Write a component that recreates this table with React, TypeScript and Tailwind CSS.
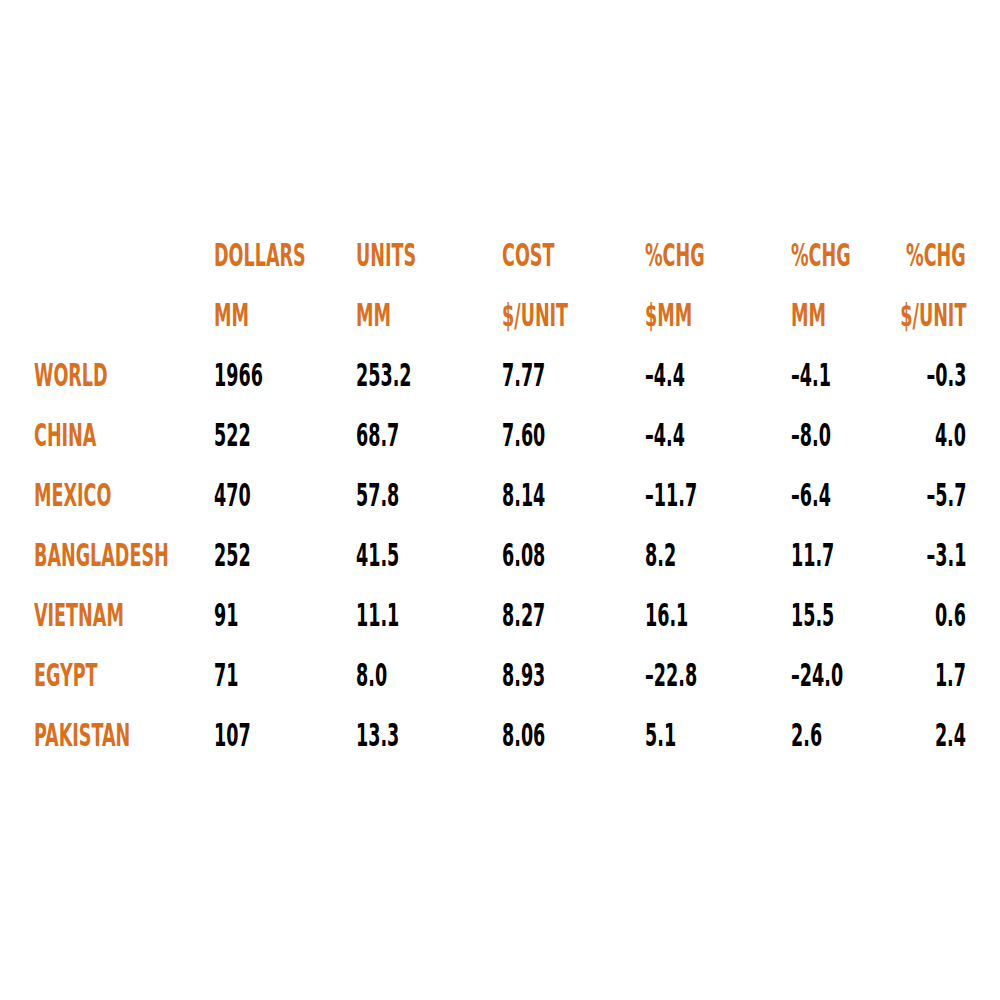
import React from 'react';

const headers: [string, string][] = [
    ['DOLLARS', 'MM'],
    ['UNITS', 'MM'],
    ['COST', '$/UNIT'],
    ['%CHG', '$MM'],
    ['%CHG', 'MM'],
    ['%CHG', '$/UNIT'],
];

const rows: string[][] = [
    ['WORLD', '1966', '253.2', '7.77', '-4.4', '-4.1', '-0.3'],
    ['CHINA', '522', '68.7', '7.60', '-4.4', '-8.0', '4.0'],
    ['MEXICO', '470', '57.8', '8.14', '-11.7', '-6.4', '-5.7'],
    ['BANGLADESH', '252', '41.5', '6.08', '8.2', '11.7', '-3.1'],
    ['VIETNAM', '91', '11.1', '8.27', '16.1', '15.5', '0.6'],
    ['EGYPT', '71', '8.0', '8.93', '-22.8', '-24.0', '1.7'],
    ['PAKISTAN', '107', '13.3', '8.06', '5.1', '2.6', '2.4'],
];

const Cell: React.FC<{ text: string; orange?: boolean; last?: boolean }> = ({ text, orange, last }) => (
    <div className={`flex h-[60px] min-w-0 items-center ${last ? 'justify-end' : 'justify-start'}`}>
        <span
            className={`inline-block shrink-0 whitespace-nowrap font-bold text-[32px] leading-none scale-x-[0.61] ${orange ? 'text-[#d8701f]' : 'text-black'} ${last ? 'origin-right' : 'origin-left'}`}
        >
            {text}
        </span>
    </div>
);

const App: React.FC = () => {
    return (
        <div
            className="min-h-[1000px] w-[1000px] bg-white px-[34px] pt-[225px]"
            style={{ fontFamily: '"Liberation Sans Narrow", "DejaVu Sans Condensed", "Liberation Sans", sans-serif' }}
        >
            <div className="grid grid-cols-[180px_142px_146px_143px_146px_60px_minmax(0,1fr)]">
                <div />
                {headers.map(([top], i) => (
                    <Cell key={'h1' + i} text={top} orange last={i === 5} />
                ))}
                <div />
                {headers.map(([, bottom], i) => (
                    <Cell key={'h2' + i} text={bottom} orange last={i === 5} />
                ))}
                {rows.map((row) =>
                    row.map((v, i) => (
                        <Cell key={row[0] + i} text={v.replace('-', '\u2013')} orange={i === 0} last={i === 6} />
                    ))
                )}
            </div>
        </div>
    );
};

export default App;
